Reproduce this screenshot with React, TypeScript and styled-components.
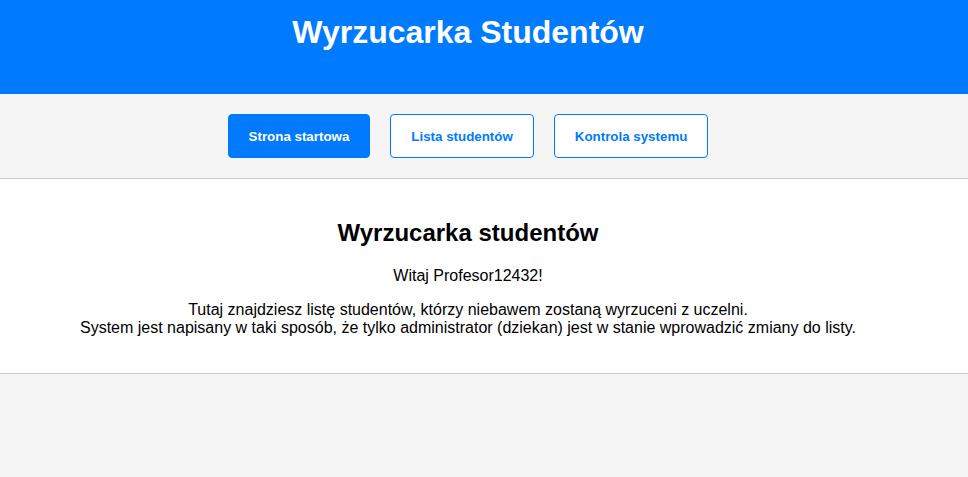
import React from "react";
import styled, { createGlobalStyle } from "styled-components";

const Global = createGlobalStyle`
  html, body { margin: 0; padding: 0; }
  body {
    background: #f5f5f5;
    font-family: "Liberation Sans", Arial, sans-serif;
    color: #000;
  }
`;

const Header = styled.header`
  background: #007bff;
  height: 94px;
  box-sizing: border-box;
  padding: 14px 32px 0 0;
  text-align: center;
`;

const Title = styled.h1`
  margin: 0;
  color: #fff;
  font-size: 32px;
  font-weight: bold;
  line-height: 37px;
`;

const Nav = styled.nav`
  display: flex;
  justify-content: center;
  gap: 20px;
  padding: 20px 32px 20px 0;
  border-bottom: 1px solid #ccc;
  background: #f5f5f5;
`;

const NavButton = styled.button<{ $active?: boolean }>`
  height: 44px;
  box-sizing: border-box;
  padding: 0 20px;
  border: 1px solid #007bff;
  border-radius: 4px;
  background: ${(p) => (p.$active ? "#007bff" : "#fff")};
  color: ${(p) => (p.$active ? "#fff" : "#007bff")};
  font-family: "Liberation Sans", Arial, sans-serif;
  font-size: 13.333px;
  font-weight: bold;
  cursor: pointer;
`;

const Main = styled.main`
  background: #fff;
  padding: 20px 32px 20px 0;
  text-align: center;
  border-bottom: 1px solid #ccc;
`;

const Heading = styled.h2`
  font-size: 24px;
  font-weight: bold;
  margin: 19.92px 0;
`;

const Para = styled.p`
  font-size: 16px;
  margin: 16px 0;
  line-height: 18px;
`;

export default function App() {
  return (
    <>
      <Global />
      <Header>
        <Title>Wyrzucarka Studentów</Title>
      </Header>
      <Nav>
        <NavButton $active>Strona startowa</NavButton>
        <NavButton>Lista studentów</NavButton>
        <NavButton>Kontrola systemu</NavButton>
      </Nav>
      <Main>
        <Heading>Wyrzucarka studentów</Heading>
        <Para>Witaj Profesor12432!</Para>
        <Para>
          Tutaj znajdziesz listę studentów, którzy niebawem zostaną wyrzuceni z uczelni.
          <br />
          System jest napisany w taki sposób, że tylko administrator (dziekan) jest w stanie wprowadzić zmiany do listy.
        </Para>
      </Main>
    </>
  );
}
